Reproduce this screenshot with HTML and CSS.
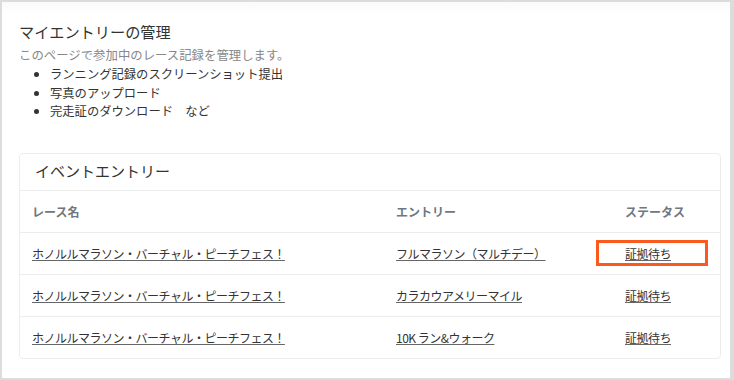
FILE: index.html
```html
<!DOCTYPE html>
<html lang="ja">
<head>
<meta charset="UTF-8" />
<title>マイエントリーの管理</title>
<link rel="stylesheet" href="styles.css">
</head>
<body>

<div class="page">
  <h2 class="page-title">マイエントリーの管理</h2>
  <p class="page-desc">このページで参加中のレース記録を管理します。</p>
  <ul class="feature-list">
    <li>ランニング記録のスクリーンショット提出</li>
    <li>写真のアップロード</li>
    <li>完走証のダウンロード　など</li>
  </ul>

  <!-- entries card -->
  <div class="card">
    <div class="card-header">イベントエントリー</div>
    <table class="entry-table">
      <colgroup>
        <col class="col-race">
        <col class="col-entry">
        <col class="col-status">
      </colgroup>
      <thead>
        <tr>
          <th>レース名</th>
          <th>エントリー</th>
          <th>ステータス</th>
        </tr>
      </thead>
      <tbody>
        <tr>
          <td><a href="#">ホノルルマラソン・バーチャル・ピーチフェス！</a></td>
          <td><a href="#">フルマラソン（マルチデー）</a></td>
          <td class="status"><a href="#">証拠待ち</a><span class="highlight"></span></td>
        </tr>
        <tr>
          <td><a href="#">ホノルルマラソン・バーチャル・ピーチフェス！</a></td>
          <td><a href="#">カラカウアメリーマイル</a></td>
          <td class="status"><a href="#">証拠待ち</a></td>
        </tr>
        <tr>
          <td><a href="#">ホノルルマラソン・バーチャル・ピーチフェス！</a></td>
          <td><a href="#">10K ラン&amp;ウォーク</a></td>
          <td class="status"><a href="#">証拠待ち</a></td>
        </tr>
      </tbody>
    </table>
  </div>
</div>

</body>
</html>
```

FILE: styles.css
```css
html, body {
  margin: 0;
  padding: 0;
}
body {
  background: #dcdcdc;
  font-family: "Noto Sans CJK JP", "Noto Sans", "Liberation Sans", sans-serif;
  color: #333;
}
.page {
  margin: 2px 4px 2px 2px;
  height: 376px;
  box-sizing: border-box;
  padding: 18px 9px 0 17px;
  background: linear-gradient(#fafafa, #fff 12px);
}
.page-title {
  margin: 0 0 4px;
  font-size: 15.2px;
  font-weight: normal;
  line-height: 22px;
  color: #333;
}
.page-desc {
  margin: 0;
  font-size: 12.4px;
  line-height: 19px;
  color: #888;
}
.feature-list {
  margin: 0;
  padding-left: 31px;
  font-size: 12.3px;
  line-height: 18.5px;
  color: #333;
}
.card {
  margin-top: 32px;
  border: 1px solid #ececec;
  border-radius: 4px;
  background: #fff;
  overflow: hidden;
}
.card-header {
  height: 36px;
  line-height: 34px;
  padding-left: 15px;
  font-size: 15px;
  color: #333;
  border-bottom: 1px solid #ececec;
}
.entry-table {
  width: 100%;
  border-collapse: collapse;
  table-layout: fixed;
}
.col-race {
  width: 364px;
}
.col-entry {
  width: 229px;
}
.entry-table th,
.entry-table td {
  height: 41px;
  padding: 0 12px;
  text-align: left;
  font-size: 12px;
  border-top: 1px solid #ececec;
}
.entry-table thead th {
  border-top: none;
  border-bottom: 1px solid #ececec;
  color: #6f7780;
  font-weight: bold;
}
.entry-table tbody tr:first-child td {
  border-top: none;
}
.entry-table a {
  color: #333;
  text-decoration: underline;
  text-decoration-color: #666;
  letter-spacing: -0.5px;
}
.status {
  position: relative;
}
.highlight {
  position: absolute;
  left: -17px;
  top: 7px;
  width: 112px;
  height: 26px;
  box-sizing: border-box;
  border: 3px solid #fa5a1e;
}
```
